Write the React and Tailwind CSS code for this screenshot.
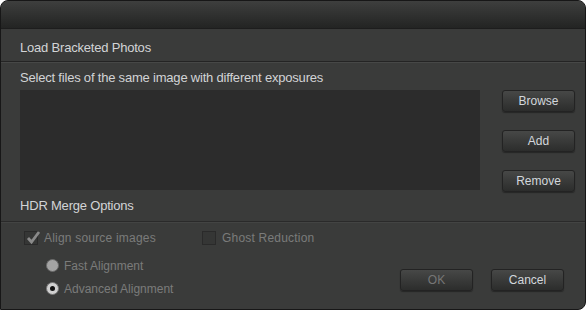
import React from 'react';

const Button = ({ children, disabled }) => (
  <button
    className={
      'w-[73px] h-[22px] rounded-[3px] border border-[#232323] bg-gradient-to-b from-[#474847] to-[#2c2d2c] text-[12px] shadow-[0_1px_1px_rgba(0,0,0,0.35)] ' +
      (disabled ? 'text-[#767676]' : 'text-[#d3d7dc]')
    }
  >
    {children}
  </button>
);

const Check = ({ checked, label }) => (
  <div className="flex items-center h-[14px]">
    <div className="relative w-[14px] h-[14px] border border-[#2a2a2a] bg-[#353635]">
      {checked && (
        <svg className="absolute left-[1px] top-[-2px]" width="15" height="15" viewBox="0 0 15 15">
          <path d="M2 8 L5.5 12 L13 2" fill="none" stroke="#8a8a8a" strokeWidth="2.8" />
        </svg>
      )}
    </div>
    <span className="ml-[6px] text-[12px] tracking-[0.2px] text-[#7b7b7b] leading-none">{label}</span>
  </div>
);

const Radio = ({ checked, label }) => (
  <div className="flex items-center h-[23px]">
    {checked ? (
      <div className="w-[13px] h-[13px] rounded-full bg-[#d0d0d0] border border-[#777] flex items-center justify-center">
        <div className="w-[5px] h-[5px] rounded-full bg-[#111]" />
      </div>
    ) : (
      <div className="w-[13px] h-[13px] rounded-full bg-[#a4a4a4] border border-[#6a6a6a]" />
    )}
    <span className="ml-[5px] text-[12px] text-[#7b7b7b] leading-none">{label}</span>
  </div>
);

export default function App() {
  return (
    <div className="w-[586px] h-[310px] bg-[#3a3b3a] border border-[#171717] rounded-tl-[8px] rounded-tr-[8px] rounded-br-[8px] overflow-hidden flex flex-col font-['Liberation_Sans',Arial,sans-serif]">
      {/* Title bar */}
      <div className="h-[28px] shrink-0 bg-gradient-to-b from-[#3e3f3e] to-[#232423] border-b border-[#1d1d1d]" />

      {/* Load section */}
      <div className="h-[33px] shrink-0 pl-[19px] pt-[11px] border-b border-[#242424]">
        <div className="text-[13px] tracking-[-0.2px] leading-[16px] text-[#d2d4d6]">Load Bracketed Photos</div>
      </div>
      <div className="h-px bg-[#474847]" />

      <div className="pl-[19px] pr-[10px]">
        <div className="mt-[7px] h-[16px] text-[13px] tracking-[-0.2px] leading-[16px] text-[#d2d4d6]">
          Select files of the same image with different exposures
        </div>
        <div className="mt-[4px] flex justify-between">
          <div className="w-[460px] h-[100px] bg-[#2c2c2c]" />
          <div className="flex flex-col gap-[18px]">
            <Button>Browse</Button>
            <Button>Add</Button>
            <Button>Remove</Button>
          </div>
        </div>
      </div>

      {/* HDR section */}
      <div className="mt-[-2px] h-[32px] shrink-0 pl-[19px] flex items-center border-b border-[#2a2a2a]">
        <div className="text-[13px] tracking-[-0.2px] leading-[16px] text-[#d2d4d6]">HDR Merge Options</div>
      </div>
      <div className="h-px bg-[#434443]" />

      <div className="flex justify-between">
        <div className="pl-[23px] pt-[8px]">
          <div className="flex">
            <div className="w-[178px]">
              <Check checked label="Align source images" />
            </div>
            <Check label="Ghost Reduction" />
          </div>
          <div className="mt-[9px] pl-[22px]">
            <Radio label="Fast Alignment" />
            <Radio checked label="Advanced Alignment" />
          </div>
        </div>
        <div className="pt-[46px] pr-[21px] flex gap-[18px]">
          <Button disabled>OK</Button>
          <Button>Cancel</Button>
        </div>
      </div>
    </div>
  );
}
